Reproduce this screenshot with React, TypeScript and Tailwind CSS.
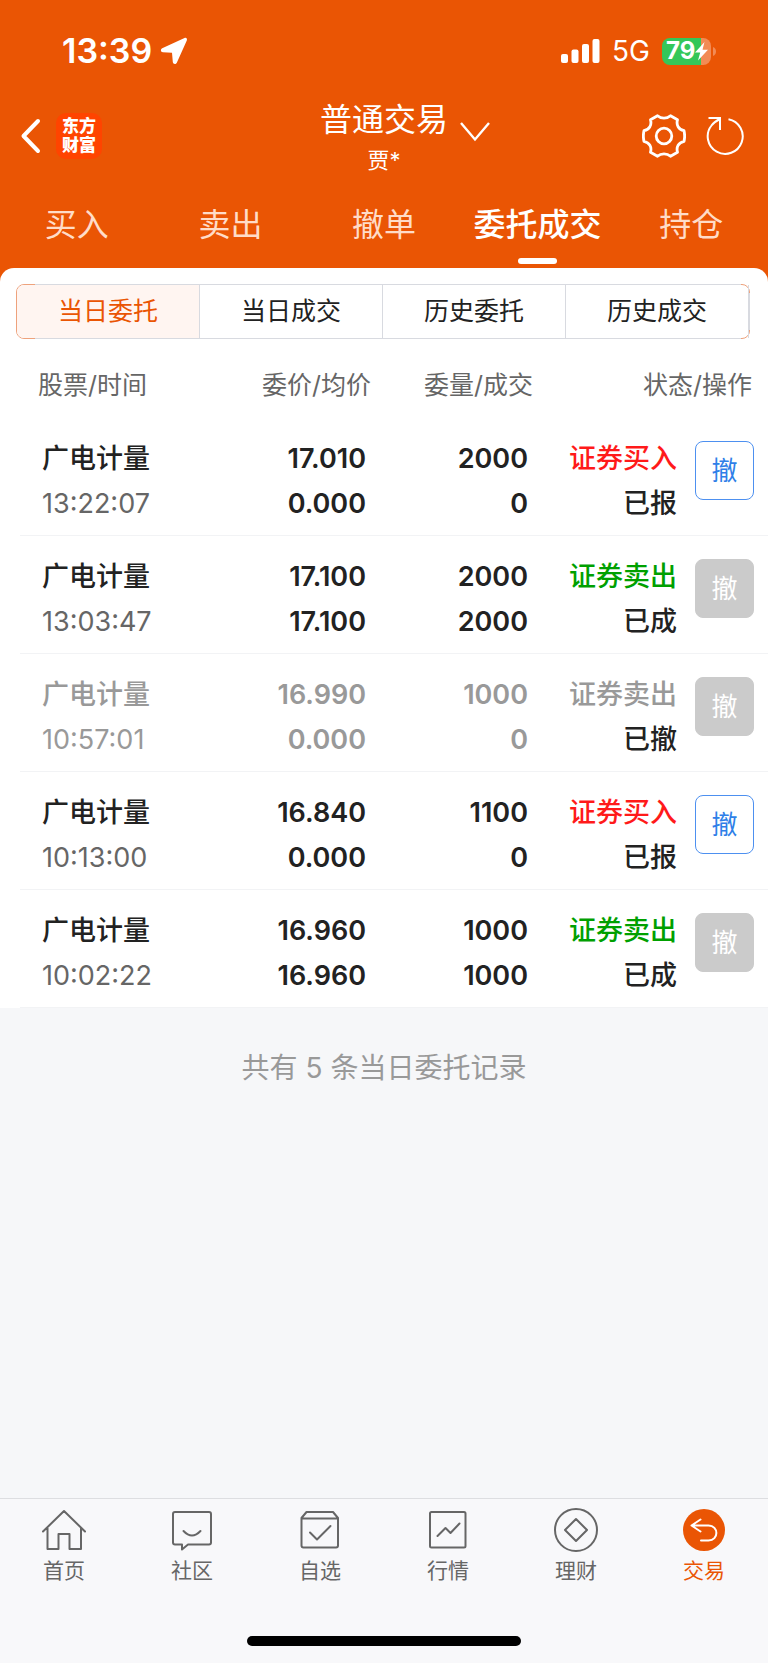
import { useState } from 'react';
import type { ReactNode } from 'react';

interface Order {
  name: string;
  time: string;
  price: string;
  avgPrice: string;
  amount: string;
  filled: string;
  side: 'buy' | 'sell';
  status: string;
}

const orders: Order[] = [
  { name: '广电计量', time: '13:22:07', price: '17.010', avgPrice: '0.000', amount: '2000', filled: '0', side: 'buy', status: '已报' },
  { name: '广电计量', time: '13:03:47', price: '17.100', avgPrice: '17.100', amount: '2000', filled: '2000', side: 'sell', status: '已成' },
  { name: '广电计量', time: '10:57:01', price: '16.990', avgPrice: '0.000', amount: '1000', filled: '0', side: 'sell', status: '已撤' },
  { name: '广电计量', time: '10:13:00', price: '16.840', avgPrice: '0.000', amount: '1100', filled: '0', side: 'buy', status: '已报' },
  { name: '广电计量', time: '10:02:22', price: '16.960', avgPrice: '16.960', amount: '1000', filled: '1000', side: 'sell', status: '已成' },
];

const tabs = ['买入', '卖出', '撤单', '委托成交', '持仓'];
const segments = ['当日委托', '当日成交', '历史委托', '历史成交'];

function StatusBar() {
  return (
    <div className="flex h-[98px] items-center justify-between pt-1 pl-[62px] pr-[52px]">
      <div className="flex items-center gap-2">
        <span className="text-[34px] leading-10 font-semibold">13:39</span>
        <svg width="28" height="28" viewBox="0 0 28 28" fill="currentColor">
          <path d="M24.500 1 2.200 11.200C.2 12.200.6 15 2.900 15.200L12 15.800 12.800 25C13 27.300 15.800 27.700 16.800 25.700L26.800 3.400C27.500 1.700 26.200.300 24.500 1z" />
        </svg>
      </div>
      <div className="flex items-center">
        <svg width="39" height="25" viewBox="0 0 39 25" fill="currentColor">
          <rect x="0" y="15" width="7" height="9" rx="2" />
          <rect x="10.500" y="10.500" width="7" height="13.500" rx="2" />
          <rect x="21" y="5" width="7" height="19" rx="2" />
          <rect x="31.500" y="0" width="7" height="24" rx="2" />
        </svg>
        <span className="ml-3 text-[28px] leading-8">5G</span>
        <div className="ml-3 flex items-center">
          <div className="flex h-[27px] w-[49px] items-center overflow-hidden rounded-lg bg-[linear-gradient(90deg,#34c759_79%,#f28b55_79%)] pl-1">
            <span className="text-2xl leading-7 font-bold">79</span>
            <svg width="13" height="19" viewBox="0 0 13 19" fill="currentColor">
              <path d="M9.500 0 0 10.500h5.200L3 18.500 13 7.800H7.500z" />
            </svg>
          </div>
          <svg className="ml-0.5" width="3" height="9" viewBox="0 0 3 9" fill="#f28b55">
            <path d="M0 0c4 1.500 4 7.500 0 9z" />
          </svg>
        </div>
      </div>
    </div>
  );
}

function Header() {
  return (
    <header className="grid h-[76px] grid-cols-[1fr_auto_1fr] items-center">
      <div className="flex items-center pl-5">
        <button type="button" aria-label="返回">
          <svg width="22" height="36" viewBox="0 0 22 36" fill="none" stroke="currentColor" strokeWidth="4" strokeLinecap="round" strokeLinejoin="round">
            <path d="M18 3 3.500 18 18 33" />
          </svg>
        </button>
        <div className="ml-3.5 flex size-[46px] flex-col items-center justify-center rounded-[10px] bg-[#ff4400] text-[17px] leading-[19px] font-black">
          <span>东方</span>
          <span>财富</span>
        </div>
      </div>
      <div className="pt-1 text-center">
        <h1 className="text-[32px] leading-9">普通交易</h1>
        <p className="mt-2 text-[22px] leading-7">贾*</p>
      </div>
      <div className="flex items-center justify-between pr-6 pl-3">
        <button type="button" aria-label="切换账户" className="-mt-2">
          <svg width="30" height="20" viewBox="0 0 30 20" fill="none" stroke="currentColor" strokeWidth="2.400">
            <path d="M1 1 15 17.500 29 1" />
          </svg>
        </button>
        <div className="flex items-center gap-5">
          <button type="button" aria-label="设置">
            <svg width="44" height="44" viewBox="0 0 44 44" fill="none" stroke="currentColor" strokeWidth="2.800" strokeLinejoin="round">
              <path d="M15.500 1.800C19 5 25 5 28.500 1.800L35.500 5.800C34 11 36.500 15.500 42 16.700C42.800 20 42.800 24 42 27.300C36.500 28.500 34 33 35.500 38.200L28.500 42.200C25 39 19 39 15.500 42.200L8.500 38.200C10 33 7.500 28.500 2 27.300C1.200 24 1.200 20 2 16.700C7.500 15.500 10 11 8.500 5.800Z" />
              <circle cx="22" cy="22" r="7.800" />
            </svg>
          </button>
          <button type="button" aria-label="刷新">
            <svg width="38" height="40" viewBox="0 0 38 40" fill="none" stroke="currentColor" strokeWidth="2">
              <path d="M22.500 3.200A17.500 17.500 0 1 1 5.500 9.500Q8 6 14 3" />
              <path d="M2.500 2H14V14" />
            </svg>
          </button>
        </div>
      </div>
    </header>
  );
}

function CancelButton({ enabled }: { enabled: boolean }) {
  return (
    <button
      type="button"
      disabled={!enabled}
      className={`size-[59px] rounded-lg border text-[26px] ${
        enabled ? 'border-[#4d90f0] bg-white text-[#2f7fe8]' : 'border-[#cbcbcb] bg-[#cbcbcb] text-white'
      }`}
    >
      撤
    </button>
  );
}

function OrderRow({ order }: { order: Order }) {
  const cancelled = order.status === '已撤';
  const main = cancelled ? 'text-[#999999]' : 'text-[#222222]';
  const sub = cancelled ? 'text-[#999999]' : 'text-[#666666]';
  let side = order.side === 'buy' ? 'text-[#ff1a1a]' : 'text-[#00a000]';
  if (cancelled) side = 'text-[#999999]';

  return (
    <tr className="border-b border-[#f2f3f5] align-top text-[27px] leading-[45px]">
      <td className="pt-[18px] pb-[9px] pl-[22px]">
        <div className={`font-medium ${main}`}>{order.name}</div>
        <div className={sub}>{order.time}</div>
      </td>
      <td className={`pt-[18px] pr-[5px] text-right font-semibold ${main}`}>
        <div>{order.price}</div>
        <div>{order.avgPrice}</div>
      </td>
      <td className={`pt-[18px] pr-[5px] text-right font-semibold ${main}`}>
        <div>{order.amount}</div>
        <div>{order.filled}</div>
      </td>
      <td className="pt-[18px] text-right font-medium">
        <div className={side}>{order.side === 'buy' ? '证券买入' : '证券卖出'}</div>
        <div className="text-[#222222]">{order.status}</div>
      </td>
      <td className="pt-[23px] pr-3.5 text-right leading-none">
        <CancelButton enabled={order.status === '已报'} />
      </td>
    </tr>
  );
}

function NavItem({ label, active, children }: { label: string; active?: boolean; children: ReactNode }) {
  return (
    <a href="#" className={`flex flex-1 flex-col items-center ${active ? 'text-[#ea5504]' : 'text-[#666666]'}`}>
      <svg width="46" height="46" viewBox="0 0 46 46" fill="none" stroke="currentColor" strokeWidth="2" strokeLinecap="round" strokeLinejoin="round">
        {children}
      </svg>
      <span className="mt-0.5 text-[21px] leading-8">{label}</span>
    </a>
  );
}

function BottomNav() {
  return (
    <nav className="mt-auto border-t border-[#dddee1] bg-[#f8f8fa]">
      <div className="flex pt-2">
        <NavItem label="首页">
          <path d="M2 24.500 23 4 44 24.500M6.500 21V42H17.500V27H28.500V42H40V21" />
        </NavItem>
        <NavItem label="社区">
          <path d="M6 5H40Q42 5 42 7V35.500Q42 37.500 40 37.500H19L13 42.500V37.500H6Q4 37.500 4 35.500V7Q4 5 6 5Z" />
          <path d="M14.500 24Q23 33 31.500 24" />
        </NavItem>
        <NavItem label="自选">
          <path d="M4.500 11 9.500 5H36L41 11V38.500Q41 40.500 39 40.500H6.500Q4.500 40.500 4.500 38.500ZM4.500 11.500H41" />
          <path d="M13 25.500 20 32.500 33.500 19" />
        </NavItem>
        <NavItem label="行情">
          <rect x="5" y="5" width="35.500" height="35.500" rx="1.500" />
          <path d="M12.500 29 20.500 21 25.500 26 34.500 16.500" />
        </NavItem>
        <NavItem label="理财">
          <circle cx="23" cy="23" r="21" />
          <path d="M23 12 34 23 23 34 12 23Z" />
        </NavItem>
        <NavItem label="交易" active>
          <circle cx="23" cy="23" r="21" fill="currentColor" stroke="none" />
          <path d="M19.500 12.500 10.500 18.500 19.500 24.500M11 18.500H27.500C38 18.500 38 33.500 27.500 33.500H20" stroke="#ffffff" />
        </NavItem>
      </div>
      <div className="flex justify-center pt-[49px] pb-[17px]">
        <div className="h-2.5 w-[274px] rounded-full bg-black" />
      </div>
    </nav>
  );
}

export default function App() {
  const [tab, setTab] = useState('委托成交');
  const [segment, setSegment] = useState('当日委托');

  return (
    <div className="flex min-h-screen flex-col bg-[#f6f7f9] font-['Inter','Noto_Sans_CJK_SC',sans-serif]">
      <div className="bg-[#ea5504] text-white">
        <StatusBar />
        <Header />
        <div className="grid h-[94px] grid-cols-5 pt-[27px]">
          {tabs.map((item) => (
            <button
              key={item}
              type="button"
              onClick={() => setTab(item)}
              className={`flex flex-col items-center text-[32px] leading-[48px] whitespace-nowrap ${
                item === tab ? 'font-medium text-white' : 'text-[#ffdcc8]'
              }`}
            >
              {item}
              {item === tab && <span className="mt-[9px] h-1.5 w-[39px] rounded-full bg-white" />}
            </button>
          ))}
        </div>
      </div>

      <main className="bg-[#ea5504]">
        <div className="rounded-t-[14px] bg-white pt-4">
          <div className="relative mr-[18px] ml-4 flex h-[55px] rounded-lg border border-[#eea27c]">
            {segments.map((item) => (
              <button
                key={item}
                type="button"
                onClick={() => setSegment(item)}
                className={`flex-1 border-r border-[#d8dae0] text-[25px] first:rounded-l-[7px] last:rounded-r-[7px] last:border-r-0 ${
                  item === segment ? 'bg-[#fff5f1] text-[#ea5504]' : 'text-[#222222]'
                }`}
              >
                {item}
              </button>
            ))}
            {/* grey edges, only the rounded corners stay orange */}
            <span className="pointer-events-none absolute -inset-y-px right-2 left-[18px] border-y border-[#d8dae0]" />
            <span className="pointer-events-none absolute inset-y-2 -right-px border-r border-[#d8dae0]" />
          </div>

          <div className="pl-5">
            <table className="w-full table-fixed border-collapse">
              <colgroup>
                <col />
                <col className="w-[162px]" />
                <col className="w-[162px]" />
                <col className="w-[144px]" />
                <col className="w-[91px]" />
              </colgroup>
              <thead>
                <tr className="h-[79px] text-[25px] text-[#666666]">
                  <th className="pt-3.5 pl-[18px] text-left font-normal">股票/时间</th>
                  <th className="pt-3.5 text-right font-normal">委价/均价</th>
                  <th className="pt-3.5 text-right font-normal">委量/成交</th>
                  <th colSpan={2} className="pt-3.5 pr-4 text-right font-normal">状态/操作</th>
                </tr>
              </thead>
              <tbody>
                {orders.map((order) => (
                  <OrderRow key={order.time} order={order} />
                ))}
              </tbody>
            </table>
          </div>
        </div>
      </main>

      <p className="pt-10 pb-10 text-center text-[28px] leading-10 text-[#999999]">共有 5 条当日委托记录</p>

      <BottomNav />
    </div>
  );
}
